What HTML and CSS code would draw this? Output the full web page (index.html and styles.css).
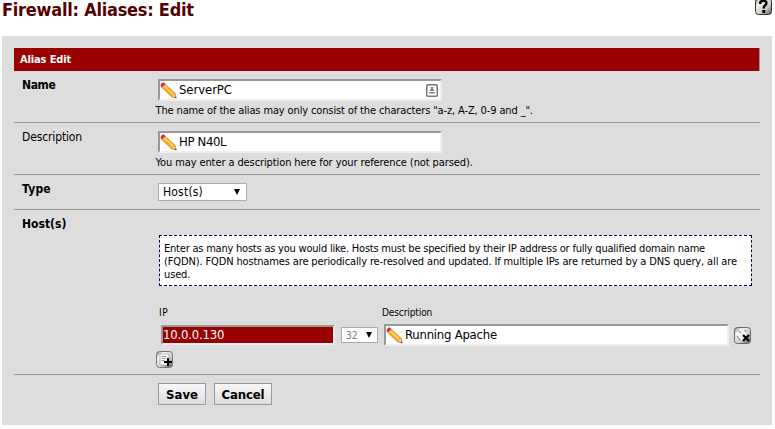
FILE: index.html
```html
<!DOCTYPE html>
<html lang="en">
<head>
<meta charset="utf-8">
<title>Firewall: Aliases: Edit</title>
<link rel="stylesheet" href="styles.css">
</head>
<body>
<svg width="0" height="0" class="defs">
  <defs>
    <linearGradient id="tile" x1="0" y1="0" x2="1" y2="1">
      <stop offset="0" stop-color="#777"/><stop offset=".25" stop-color="#f4f4f2"/><stop offset=".65" stop-color="#c9cbc4"/><stop offset="1" stop-color="#50554c"/>
    </linearGradient>
    <linearGradient id="wood" x1="0" y1="1" x2="1" y2="0">
      <stop offset="0" stop-color="#e88a12"/><stop offset=".5" stop-color="#ffae1c"/><stop offset="1" stop-color="#ffd86a"/>
    </linearGradient>
    <symbol id="pencil" viewBox="0 0 17 17">
      <path d="M1 3.2 3.6.7 14.8 11l1.4 5-5-1.5L1 4.7z" fill="url(#wood)" stroke="#dc7a16" stroke-width=".7"/>
      <path d="M4.5 4.2 13 12.3" stroke="#ffdc70" stroke-width="1.2"/>
      <path d="M11.2 14.3l3.5-3.3 1.5 5z" fill="#f2cfa0" stroke="#c77a35" stroke-width=".6"/>
      <path d="M14.6 15.5l1.2-1.2.5 1.9z" fill="#7a421d"/>
      <path d="M2.7 5.7 5.6 2.8 6.6 3.7 3.7 6.6z" fill="#eac4a1"/>
      <path d="M.7 3.8Q.7.7 3.7.5L5.4 2 2.3 5.3z" fill="#e02d48"/>
    </symbol>
  </defs>
</svg>
<header class="top">
  <h1>Firewall: Aliases: Edit</h1>
  <svg class="help" width="17" height="17" viewBox="0 0 17 17"><rect x=".5" y=".5" width="16" height="16" rx="3" fill="url(#tile)" stroke="#30332d"/><path d="M5.2 6V4.5Q5.5 2.8 8.5 2.8t3 2.3q0 1.6-1.6 2.3Q8.7 8.2 8.7 10.5" fill="none" stroke="#000" stroke-width="2.4"/><path d="M7.3 12h3v3h-3z"/></svg>
</header>
<main class="panel">
  <form class="sheet">
    <h2>Alias Edit</h2>
    <div class="row name">
      <div class="label bold tight">Name</div>
      <div class="cell">
        <div class="field"><svg width="17" height="17"><use href="#pencil"/></svg><span class="value">ServerPC</span>
          <svg class="card" width="12" height="13" viewBox="0 0 12 13"><rect x=".75" y=".75" width="10.5" height="11.5" rx="1" fill="#fff" stroke="#777" stroke-width="1.5"/><path d="M5 3h2v2h1v2H4V5h1zM3 8h6v1.5H3z" fill="#888"/></svg>
        </div>
        <div class="note"><span>The name of the alias may only consist of the characters "a-z, A-Z, 0-9 and _".</span></div>
      </div>
    </div>
    <div class="row desc">
      <div class="label plain">Description</div>
      <div class="cell">
        <div class="field"><svg width="17" height="17"><use href="#pencil"/></svg><span class="value tight">HP N40L</span></div>
        <div class="note second"><span>You may enter a description here for your reference (not parsed).</span></div>
      </div>
    </div>
    <div class="row type">
      <div class="label bold wider">Type</div>
      <div class="cell"><div class="select"><span class="wider">Host(s)</span><i class="arrow"></i></div></div>
    </div>
    <div class="row hosts">
      <div class="label bold">Host(s)</div>
      <div class="cell">
        <div class="hint"><span class="first">Enter as many hosts as you would like. Hosts must be specified by their IP address or fully qualified domain name</span><br><span>(FQDN). FQDN hostnames are periodically re-resolved and updated. If multiple IPs are returned by a DNS query, all are</span><br><span>used.</span></div>
        <div class="heads"><span class="wider">IP</span><span>Description</span></div>
        <div class="entry">
          <div class="ip"><span class="value">10.0.0.130</span></div>
          <div class="select mask"><span>32</span><i class="arrow"></i></div>
          <div class="field wide"><svg width="17" height="17"><use href="#pencil"/></svg><span class="value">Running Apache</span></div>
          <svg class="del" width="17" height="17" viewBox="0 0 17 17"><rect x=".5" y=".5" width="16" height="16" rx="3" fill="url(#tile)" stroke="#666"/><path d="M3 5l5-2 5 3-2 4-3 4-5-4z" fill="#f3f3f0"/><path d="M4 3.5 7 6M11 3l1 2M3 9l3 4" stroke="#777"/><path d="M9 8l6 6M15 8l-6 6" stroke="#000" stroke-width="2.3"/></svg>
        </div>
        <svg class="add" width="17" height="17" viewBox="0 0 17 17"><rect x=".5" y=".5" width="16" height="16" rx="3" fill="url(#tile)" stroke="#777"/><path d="M4 3h9v11H4z" fill="#fafafa" stroke="#999" stroke-width=".6"/><path d="M5.5 5.5h5M5.5 7.5h4M5.5 9.5h3" stroke="#999"/><path d="M8 11h8M12 7v8" stroke="#000" stroke-width="2"/></svg>
      </div>
    </div>
    <div class="row actions">
      <div class="label"></div>
      <div class="buttons"><button type="button" class="save">Save</button><button type="button" class="cancel">Cancel</button></div>
    </div>
  </form>
</main>
</body>
</html>
```
FILE: styles.css
```css
* { box-sizing: border-box; }
body { margin: 0; width: 775px; height: 429px; overflow: hidden; background: #fff; color: #000; font: 11px "DejaVu Sans Condensed", "DejaVu Sans", sans-serif; font-stretch: condensed; }
span { white-space: nowrap; }
svg { display: block; flex: none; }
.defs { position: absolute; }
.top { height: 36px; padding: 0 3px 0 2px; display: flex; justify-content: space-between; align-items: flex-start; }
h1 { margin: -1px 0 0; font-size: 18px; line-height: 22px; color: #500; letter-spacing: -.25px; }
.help { margin-top: -2px; }
.panel { width: 770px; height: 389px; margin-left: 2px; padding: 12px; background: #ddd; }
.sheet { width: 746px; }
h2 { margin: 0; height: 23px; padding-left: 6px; background: #900; border-right: 1px solid #999; color: #fff; font-size: 11px; line-height: 24px; letter-spacing: -.13px; }
.row { display: grid; grid-template-columns: 141px 1fr; border-bottom: 1px solid #999; }
.label { padding: 6px 0 0 8px; font-size: 12px; line-height: 16px; }
.plain { letter-spacing: -.13px; }
.bold { font-weight: bold; }
.name, .desc { height: 52px; }
.type { height: 35px; }
.hosts { height: 165px; }
.actions { border: 0; }
.field, .ip { display: flex; align-items: center; height: 22px; background: #fff; border: 2px solid #eee; border-top-color: #999; border-left-color: #999; }
.field { width: 284px; margin: 8px 0 0 3px; }
.value { font-size: 13px; line-height: 18px; letter-spacing: -.08px; }
.field .value { margin-left: 2px; }
.field .tight, .tight { letter-spacing: -.35px; }
.wider { letter-spacing: .2px; }
.card { margin: 0 2px 0 auto; }
.note { line-height: 14px; margin-top: 3px; padding-left: .5px; letter-spacing: -.13px; }
.second { letter-spacing: -.1px; }
.select { width: 89px; height: 18px; margin: 8px 0 0 3px; padding: 0 6px 0 4px; display: flex; align-items: center; justify-content: space-between; background: #fff; border: 1px solid #aaa; font-size: 12px; }
.arrow { border: 3.5px solid transparent; border-top: 6px solid #000; border-bottom: 0; }
.hint { width: 593px; height: 51px; margin: 25px 0 0 4px; padding: 6px 4px; border: 1px dashed #006; background: #fff; line-height: 13px; letter-spacing: -.135px; }
.first { letter-spacing: -.215px; }
.heads { display: grid; grid-template-columns: 223px 1fr; padding-left: 4px; margin-top: 20px; font-size: 10px; line-height: 14px; letter-spacing: -.1px; }
.heads .wider { letter-spacing: .6px; }
.entry { display: flex; height: 22px; margin: 4px 0 0 6px; align-items: center; }
.ip { width: 174px; height: 20px; }
.ip .value { width: 100%; background: #900; color: #fff; line-height: 16px; letter-spacing: -.2px; }
.mask { width: 37px; height: 16px; margin: 0 0 0 6px; padding: 0 5px 0 4px; font-size: 10px; color: #777; }
.wide { width: 345px; margin: 0 0 0 6px; }
.wide .value { letter-spacing: -.24px; }
.del { margin-left: 5px; }
.add { margin: 5px 0 0 1px; }
.buttons { display: flex; gap: 8px; padding: 8px 0 0 3px; }
button { height: 22px; padding: 0; border: 1px solid #999; background: linear-gradient(#f8f8f8, #ddd); color: #000; font: bold 13px "DejaVu Sans Condensed", "DejaVu Sans", sans-serif; }
.save { width: 48px; }
.cancel { width: 58px; letter-spacing: -.1px; }
```
